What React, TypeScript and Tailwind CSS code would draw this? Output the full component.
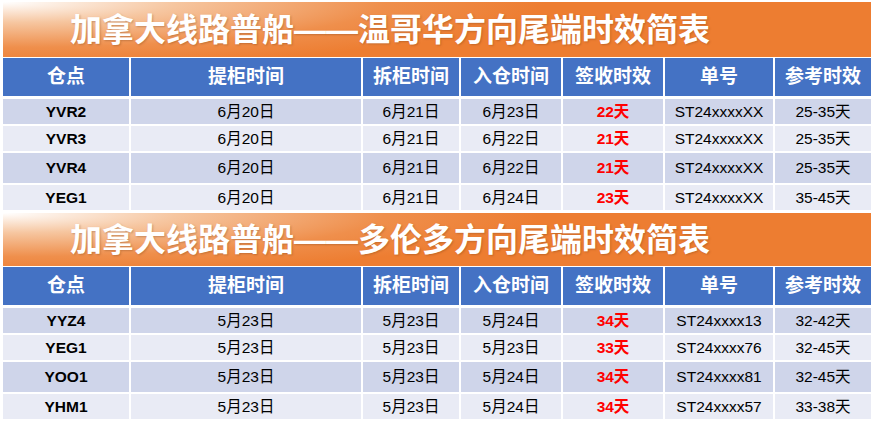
const cols = "grid grid-cols-[126px_230px_96px_100px_100px_108px_96px] gap-x-[2px]"
const font = { fontFamily: '"Liberation Sans", "Noto Sans CJK SC", sans-serif' }

type Row = { code: string; pick: string; unload: string; inbound: string; days: string; no: string; ref: string; h: string }

const vancouver: Row[] = [
  { code: "YVR2", pick: "6月20日", unload: "6月21日", inbound: "6月23日", days: "22天", no: "ST24xxxxXX", ref: "25-35天", h: "h-[25px]" },
  { code: "YVR3", pick: "6月20日", unload: "6月21日", inbound: "6月22日", days: "21天", no: "ST24xxxxXX", ref: "25-35天", h: "h-[25px]" },
  { code: "YVR4", pick: "6月20日", unload: "6月21日", inbound: "6月22日", days: "21天", no: "ST24xxxxXX", ref: "25-35天", h: "h-[30px]" },
  { code: "YEG1", pick: "6月20日", unload: "6月21日", inbound: "6月24日", days: "23天", no: "ST24xxxxXX", ref: "35-45天", h: "h-[25px]" },
]

const toronto: Row[] = [
  { code: "YYZ4", pick: "5月23日", unload: "5月23日", inbound: "5月24日", days: "34天", no: "ST24xxxx13", ref: "32-42天", h: "h-[25px]" },
  { code: "YEG1", pick: "5月23日", unload: "5月23日", inbound: "5月23日", days: "33天", no: "ST24xxxx76", ref: "32-45天", h: "h-[25px]" },
  { code: "YOO1", pick: "5月23日", unload: "5月23日", inbound: "5月24日", days: "34天", no: "ST24xxxx81", ref: "32-45天", h: "h-[30px]" },
  { code: "YHM1", pick: "5月23日", unload: "5月23日", inbound: "5月24日", days: "34天", no: "ST24xxxx57", ref: "33-38天", h: "h-[25px]" },
]

const headers = ["仓点", "提柜时间", "拆柜时间", "入仓时间", "签收时效", "单号", "参考时效"]

function Section({ title, rows, bannerH }: { title: string; rows: Row[]; bannerH: string }) {
  return (
    <div className="flex flex-col">
      {/* Banner */}
      <div
        className={`${bannerH} flex items-center pl-[67px] bg-[radial-gradient(ellipse_80%_150%_at_0%_0%,#ffffff_0%,#f6c6a0_25%,#ef8f4c_55%,#ed7d31_78%)]`}
      >
        <span className="text-white font-bold text-[32px] leading-none [text-shadow:1px_1px_2px_rgba(120,60,20,0.35)]">
          {title}
        </span>
      </div>

      {/* Header */}
      <div className={`${cols} mt-[1px] h-[38px]`}>
        {headers.map((h) => (
          <div key={h} className="bg-[#4472c4] flex items-center justify-center text-white font-bold text-[19px]">
            {h}
          </div>
        ))}
      </div>

      {/* Rows */}
      <div className="mt-[3px] flex flex-col gap-y-[2px]">
        {rows.map((r, i) => {
          const bg = i % 2 === 0 ? "bg-[#cfd5ea]" : "bg-[#e9ebf5]"
          return (
            <div key={r.code + i} className={`${cols} ${r.h} text-[15.5px] text-black`}>
              <div className={`${bg} flex items-center justify-center font-bold`}>{r.code}</div>
              <div className={`${bg} flex items-center justify-center`}>{r.pick}</div>
              <div className={`${bg} flex items-center justify-center`}>{r.unload}</div>
              <div className={`${bg} flex items-center justify-center`}>{r.inbound}</div>
              <div className={`${bg} flex items-center justify-center font-bold text-[#ff0000]`}>{r.days}</div>
              <div className={`${bg} flex items-center justify-center`}>{r.no}</div>
              <div className={`${bg} flex items-center justify-center`}>{r.ref}</div>
            </div>
          )
        })}
      </div>
    </div>
  )
}

export default function App() {
  return (
    <div className="w-[875px] h-[426px] bg-white px-[3px] pt-[2px] overflow-hidden" style={font}>
      <div className="w-[868px] flex flex-col gap-y-[3px]">
        <Section title="加拿大线路普船——温哥华方向尾端时效简表" rows={vancouver} bannerH="h-[55px]" />
        <Section title="加拿大线路普船——多伦多方向尾端时效简表" rows={toronto} bannerH="h-[53px]" />
      </div>
    </div>
  )
}
